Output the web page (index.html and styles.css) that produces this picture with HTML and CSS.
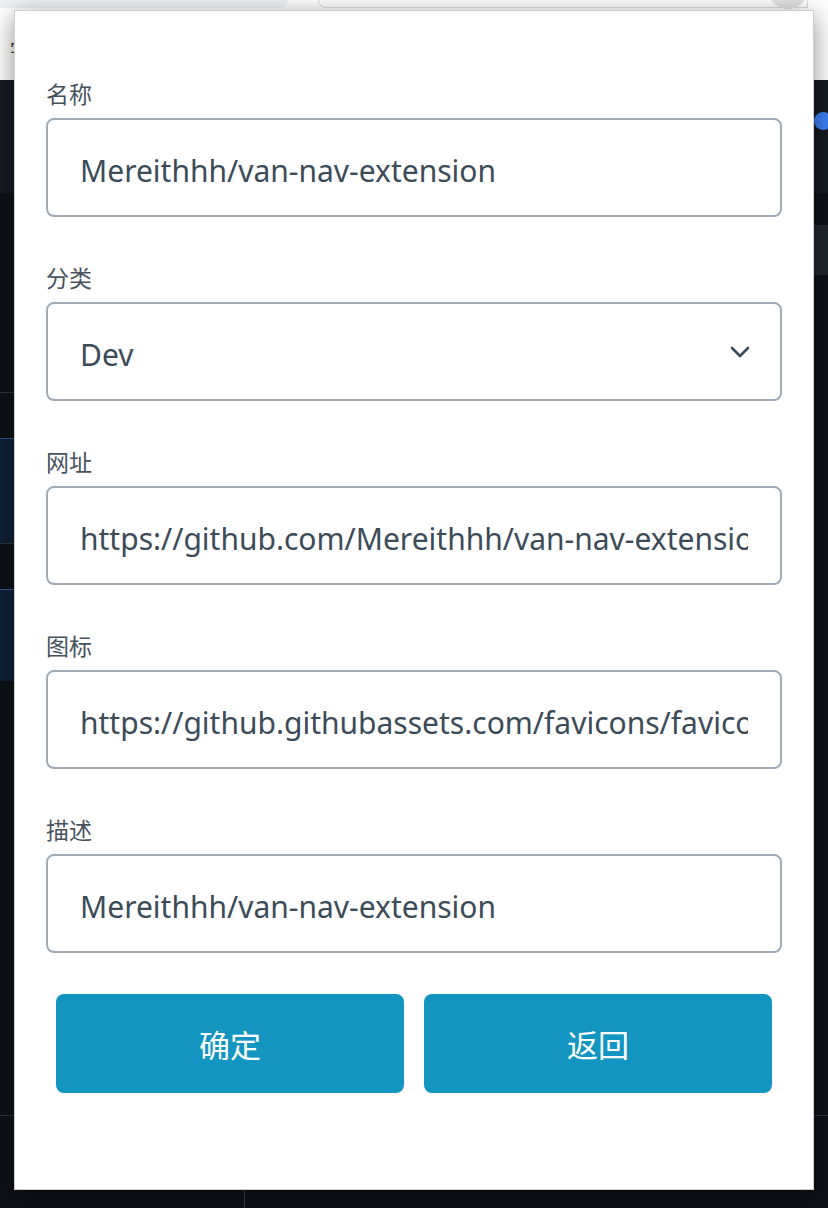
FILE: index.html
```html
<!DOCTYPE html>
<html lang="zh-CN">
<head>
    <meta charset="UTF-8">
    <meta name="viewport" content="width=device-width, initial-scale=1.0">
    <title>van-nav</title>
    <link rel="stylesheet" href="styles.css">
</head>
<body>
    <div class="browser">
        <div class="tabstrip">
            <div class="tab"></div>
            <div class="omnibox"></div>
            <div class="round-btn"></div>
        </div>
        <div class="toolbar"><span class="crumb">字</span></div>
    </div>

    <div class="site">
        <div class="site-header">
            <div class="avatar"></div>
        </div>
        <div class="site-body">
            <div class="side">
                <div class="side-item"></div>
                <div class="side-item active"></div>
                <div class="side-item"></div>
                <div class="side-item active short"></div>
            </div>
            <div class="site-main">
                <div class="strip"></div>
            </div>
        </div>
        <div class="site-foot">
            <div class="foot-left"></div>
            <div class="foot-right"></div>
        </div>
    </div>

    <div class="popup">
        <form class="form">
            <div class="field">
                <label for="name">名称</label>
                <input id="name" type="text" value="Mereithhh/van-nav-extension">
            </div>
            <div class="field">
                <label for="catelog">分类</label>
                <div class="select-wrap">
                    <select id="catelog">
                        <option>Dev</option>
                    </select>
                    <svg class="chevron" width="20" height="12" viewBox="0 0 20 12">
                        <path d="M2 2 L10 10 L18 2" fill="none" stroke="#3b4b58" stroke-width="2.6" stroke-linecap="round" stroke-linejoin="round"/>
                    </svg>
                </div>
            </div>
            <div class="field">
                <label for="url">网址</label>
                <input id="url" type="text" value="https://github.com/Mereithhh/van-nav-extension">
            </div>
            <div class="field">
                <label for="logo">图标</label>
                <input id="logo" type="text" value="https://github.githubassets.com/favicons/favicon.svg">
            </div>
            <div class="field">
                <label for="desc">描述</label>
                <input id="desc" type="text" value="Mereithhh/van-nav-extension">
            </div>
            <div class="actions">
                <button type="button" class="btn">确定</button>
                <button type="button" class="btn">返回</button>
            </div>
        </form>
    </div>
</body>
</html>
```
FILE: styles.css
```css
*{
    margin: 0px;
    padding: 0px;
    box-sizing: border-box;
}

body{
    width: 828px;
    height: 1208px;
    overflow: hidden;
    background-color: #0d1117;
    font-family: "Noto Sans", "Noto Sans CJK SC", sans-serif;
    position: relative;
}

/* browser chrome behind the popup */
.browser{
    height: 80px;
    background-color: #ffffff;
}
.tabstrip{
    height: 8px;
    background-color: #ffffff;
    display: flex;
}
.tab{
    width: 288px;
    background-color: #eff1f3;
    border-bottom-right-radius: 14px;
}
.omnibox{
    flex: 1;
    margin-left: 30px;
    border: 1px solid #dcdcdc;
    border-top: none;
    border-bottom-left-radius: 14px;
    background-color: #ffffff;
}
.round-btn{
    width: 40px;
    height: 40px;
    margin: -31px 20px 0 -40px;
    border-radius: 50%;
    background-color: #e3e3e3;
}
.toolbar{
    height: 72px;
    padding: 28px 0 0 10px;
}
.crumb{
    font-size: 18px;
    color: #333;
}

/* dark page */
.site-header{
    height: 113px;
    background-color: #161b22;
    display: flex;
    justify-content: flex-end;
    padding: 32px 0 0 0;
}
.avatar{
    width: 18px;
    height: 18px;
    border-radius: 50%;
    background-color: #3b82f6;
    margin-right: -4px;
}
.site-body{
    display: flex;
    height: 922px;
}
.side{
    width: 245px;
    padding-top: 199px;
    border-right: 1px solid #21262d;
}
.side-item{
    height: 46px;
    border-top: 1px solid #30363d;
}
.side-item.active{
    height: 105px;
    background-color: #0f2038;
    border-top: 1px solid #2f5a92;
}
.side-item.short{
    height: 92px;
}
.site-main{
    flex: 1;
    padding-top: 32px;
}
.strip{
    height: 50px;
    background-color: #22272e;
}
.site-foot{
    height: 93px;
    display: flex;
    border-top: 1px solid #30363d;
}
.foot-left{
    width: 245px;
    border-right: 1px solid #3a3f46;
}

/* the extension popup */
.popup{
    position: absolute;
    left: 14px;
    top: 10px;
    width: 800px;
    height: 1180px;
    background-color: #ffffff;
    border: 1px solid #cfcfcf;
    box-shadow: 0 6px 24px rgba(0, 0, 0, 0.45);
    padding: 68px 31px 0 31px;
}

.field + .field{
    margin-top: 46px;
}
.field label{
    display: block;
    font-size: 23px;
    line-height: 30px;
    color: #46525d;
    margin-bottom: 9px;
}
.field input,
.field select{
    display: block;
    width: 100%;
    height: 99px;
    border: 2px solid #a1abb6;
    border-radius: 8px;
    padding: 5px 32px 0 32px;
    font-family: "Noto Sans", "Noto Sans CJK SC", sans-serif;
    font-size: 30px;
    color: #3b4b58;
    background-color: #ffffff;
    outline: none;
}
.select-wrap{
    position: relative;
}
.field select{
    appearance: none;
    -webkit-appearance: none;
}
.chevron{
    position: absolute;
    right: 32px;
    top: 44px;
}

.actions{
    display: flex;
    gap: 20px;
    padding: 0 10px;
    margin-top: 41px;
}
.btn{
    flex: 1;
    height: 99px;
    border: none;
    border-radius: 8px;
    background-color: #1296c1;
    color: #ffffff;
    font-family: "Noto Sans", "Noto Sans CJK SC", sans-serif;
    font-size: 31px;
    font-weight: 400;
}
```
